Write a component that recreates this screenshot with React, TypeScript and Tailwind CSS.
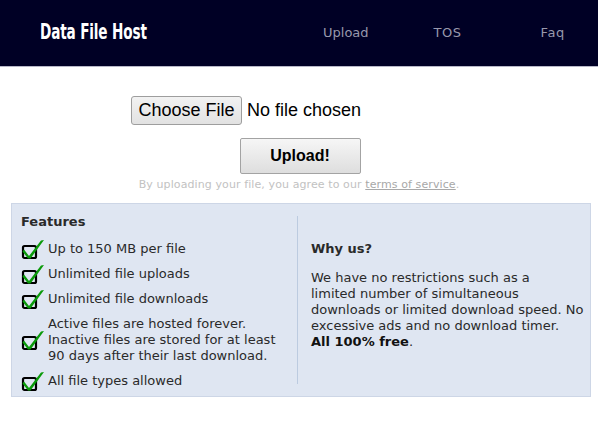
import React from "react";

const features: string[][] = [
  ["Up to 150 MB per file"],
  ["Unlimited file uploads"],
  ["Unlimited file downloads"],
  [
    "Active files are hosted forever.",
    "Inactive files are stored for at least",
    "90 days after their last download.",
  ],
  ["All file types allowed"],
];

// checkbox with a green tick drawn over it
function CheckMark() {
  return (
    <svg width="24" height="22" viewBox="0 0 24 22" className="shrink-0">
      <rect x="2" y="8" width="13" height="12" rx="1.5" fill="none" stroke="#000" strokeWidth="2.2" />
      <path d="M3 11.5 L8 18 L20 2.5 L23 2 L9.5 20.5 L7 20.5 L1.5 13.5 Z" fill="#0a9a0a" />
    </svg>
  );
}

export default function App() {
  return (
    <div className="min-h-[424px] bg-white font-['DejaVu_Sans',sans-serif] text-[#333]">
      {/* Header */}
      <div className="h-[67px] bg-[#000025] border-b border-[#b8b8c8] flex items-center">
        <div className="w-[160px] pl-[40px]">
          <span className="inline-block origin-left scale-x-[0.72] font-['DejaVu_Sans_Condensed','DejaVu_Sans',sans-serif] font-bold text-[21px] text-white tracking-[-0.2px] whitespace-nowrap">
            Data File Host
          </span>
        </div>
        <div className="flex-1 flex items-center text-[13px] text-[#9898ac] font-['DejaVu_Sans',sans-serif]">
          <span className="ml-[163px]">Upload</span>
          <span className="ml-[65px] tracking-[0.5px]">TOS</span>
          <span className="ml-[79px] tracking-[0.6px]">Faq</span>
        </div>
      </div>

      {/* Upload form */}
      <div className="flex flex-col items-center font-['Liberation_Sans',Arial,sans-serif]">
        <div className="mt-[29px] self-start ml-[131px] flex items-center">
          <div className="h-[29px] w-[111px] flex items-center justify-center border border-[#9e9e9e] rounded-[3px] bg-gradient-to-b from-[#f2f2f2] to-[#e2e2e2] text-[18px] text-black">
            Choose File
          </div>
          <span className="ml-[5px] text-[18px] text-black">No file chosen</span>
        </div>
        <div className="mt-[13px] ml-[2px] h-[36px] w-[121px] flex items-center justify-center border border-[#a3a3a3] rounded-[2px] bg-gradient-to-b from-[#f6f6f6] to-[#dedede] text-[16px] font-bold text-black">
          Upload!
        </div>
        <div className="mt-[3px] text-[11px] leading-[15px] text-[#c2c2c2] font-['DejaVu_Sans',sans-serif] tracking-[0.1px]">
          By uploading your file, you agree to our{" "}
          <span className="underline text-[#a8a8a8]">terms of service</span>.
        </div>
      </div>

      {/* Features / Why us */}
      <div className="mt-[11px] ml-[11px] mr-[7px] h-[194px] bg-[#dfe6f2] border border-[#cdd6e6] flex text-[13px] text-[#2a2a2a]">
        <div className="w-[285px] pl-[9px] pt-[10px]">
          <div className="font-bold text-[13px] leading-[16px]">Features</div>
          <div className="mt-[11px] flex flex-col gap-[9px]">
            {features.map((lines, i) => (
              <div key={i} className="flex items-center">
                <div className="w-[27px] h-[16px] flex items-center">
                  <CheckMark />
                </div>
                <div className="leading-[16px]">
                  {lines.map((l, j) => (
                    <div key={j} className="whitespace-nowrap">{l}</div>
                  ))}
                </div>
              </div>
            ))}
          </div>
        </div>
        <div className="my-[12px] w-px bg-[#bccbe0]" />
        <div className="flex-1 pl-[13px] pr-[4px] pt-[37px] leading-[16px] whitespace-nowrap">
          <div className="font-bold">Why us?</div>
          <p className="mt-[13px]">
            We have no restrictions such as a<br />
            limited number of simultaneous<br />
            downloads or limited download speed. No<br />
            excessive ads and no download timer.<br />
            <b className="text-[#111]">All 100% free</b>.
          </p>
        </div>
      </div>
    </div>
  );
}
